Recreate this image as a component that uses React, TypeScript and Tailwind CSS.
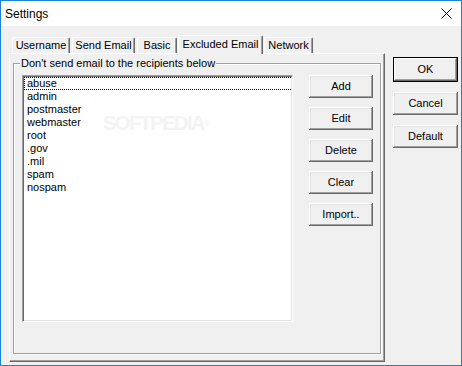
import React from 'react'

const font = { fontFamily: '"Liberation Sans", Arial, sans-serif' }

const items = ['abuse', 'admin', 'postmaster', 'webmaster', 'root', '.gov', '.mil', 'spam', 'nospam']

function Btn({ label, primary }: { label: string; primary?: boolean }) {
    if (primary) {
        return (
            <div className="w-[65px] h-[25px] border border-black bg-[#f0f0f0] flex items-center justify-center text-[11px] text-black shadow-[inset_-1px_-1px_#696969,inset_1px_1px_#fff,inset_-2px_-2px_#a0a0a0]">
                {label}
            </div>
        )
    }
    return (
        <div className="w-[65px] h-[23px] bg-[#f0f0f0] flex items-center justify-center text-[11px] text-black shadow-[inset_-1px_-1px_#696969,inset_1px_1px_#fff,inset_-2px_-2px_#a0a0a0,inset_2px_2px_#e3e3e3]">
            {label}
        </div>
    )
}

function PanelBtn({ label }: { label: string }) {
    return (
        <div className="w-[64px] h-[23px] bg-[#f0f0f0] flex items-center justify-center text-[11px] text-black shadow-[inset_-1px_-1px_#696969,inset_1px_1px_#fff,inset_-2px_-2px_#a0a0a0,inset_2px_2px_#e3e3e3]">
            {label}
        </div>
    )
}

export default function App() {
    return (
        <div className="w-[462px] h-[366px] border border-[#1883d7] flex flex-col bg-[#f0f0f0]" style={font}>
            {/* Title bar */}
            <div className="h-[25px] bg-white flex items-center justify-between pl-[4px] pr-[8px]">
                <span className="text-[12px] text-black">Settings</span>
                <svg width="11" height="11" viewBox="0 0 11 11" className="mr-[1px]">
                    <path d="M0.5 0.5 L10.5 10.5 M10.5 0.5 L0.5 10.5" stroke="#000" strokeWidth="1" fill="none" />
                </svg>
            </div>

            <div className="flex-1 flex">
                {/* Tabs + panel */}
                <div className="pl-[8px] pt-[9px] flex flex-col">
                    <div className="flex items-end h-[18px] text-[11px] text-black">
                        <div className="ml-[3px] w-[58px] h-[16px] border-l border-t border-white border-r border-r-[#696969] rounded-t-[2px] shadow-[inset_-1px_0_#a0a0a0] flex items-center justify-center">Username</div>
                        <div className="ml-[2px] w-[63px] h-[16px] border-l border-t border-white border-r border-r-[#696969] rounded-t-[2px] shadow-[inset_-1px_0_#a0a0a0] flex items-center justify-center">Send Email</div>
                        <div className="ml-[2px] w-[40px] h-[16px] border-l border-t border-white border-r border-r-[#696969] rounded-t-[2px] shadow-[inset_-1px_0_#a0a0a0] flex items-center justify-center">Basic</div>
                        <div className="relative z-10 -mb-px ml-px w-[85px] h-[19px] bg-[#f0f0f0] border-l border-t border-white border-r border-r-[#696969] rounded-t-[2px] shadow-[inset_-1px_0_#a0a0a0] flex items-center justify-center pb-[2px]">Excluded Email</div>
                        <div className="ml-px w-[49px] h-[16px] border-l border-t border-white border-r border-r-[#696969] rounded-t-[2px] shadow-[inset_-1px_0_#a0a0a0] flex items-center justify-center">Network</div>
                    </div>

                    <div className="w-[376px] h-[309px] border border-white border-r-[#696969] border-b-[#696969] shadow-[inset_-1px_-1px_#a0a0a0] pt-[9px] px-[3px] pb-[7px]">
                        {/* Group box */}
                        <div className="relative h-full border border-[#a0a0a0] shadow-[inset_1px_1px_#fff,1px_1px_#fff] pl-[8px] pt-[11px] flex items-start">
                            <span className="absolute left-[6px] -top-[7px] bg-[#f0f0f0] px-px text-[11px] leading-[13px] text-black">
                                Don't send email to the recipients below
                            </span>

                            <div className="relative w-[271px] h-[247px] bg-white border border-t-[#a0a0a0] border-l-[#a0a0a0] border-r-white border-b-white shadow-[inset_1px_1px_#696969,inset_-1px_-1px_#e3e3e3] pt-px pl-px overflow-hidden">
                                <span className="absolute left-[80px] top-[32px] text-[20px] font-bold tracking-[-1.5px] text-[#f3f3f3] select-none">
                                    SOFTPEDIA<sup className="text-[8px] font-normal">®</sup>
                                </span>
                                <div className="relative">
                                    {items.map((item, i) => (
                                        <div
                                            key={item}
                                            className={
                                                i === 0
                                                    ? 'h-[13px] leading-[11px] pl-[2px] text-[11px] text-black border border-dotted border-black w-[269px]'
                                                    : 'h-[13px] leading-[13px] pl-[3px] text-[11px] text-black'
                                            }
                                        >
                                            {item}
                                        </div>
                                    ))}
                                </div>
                            </div>

                            <div className="ml-[16px] flex flex-col gap-[9px]">
                                <PanelBtn label="Add" />
                                <PanelBtn label="Edit" />
                                <PanelBtn label="Delete" />
                                <PanelBtn label="Clear" />
                                <PanelBtn label="Import.." />
                            </div>
                        </div>
                    </div>
                </div>

                {/* Dialog buttons */}
                <div className="ml-[8px] pt-[31px] flex flex-col">
                    <Btn label="OK" primary />
                    <div className="mt-[10px]"><Btn label="Cancel" /></div>
                    <div className="mt-[10px]"><Btn label="Default" /></div>
                </div>
            </div>
        </div>
    )
}
